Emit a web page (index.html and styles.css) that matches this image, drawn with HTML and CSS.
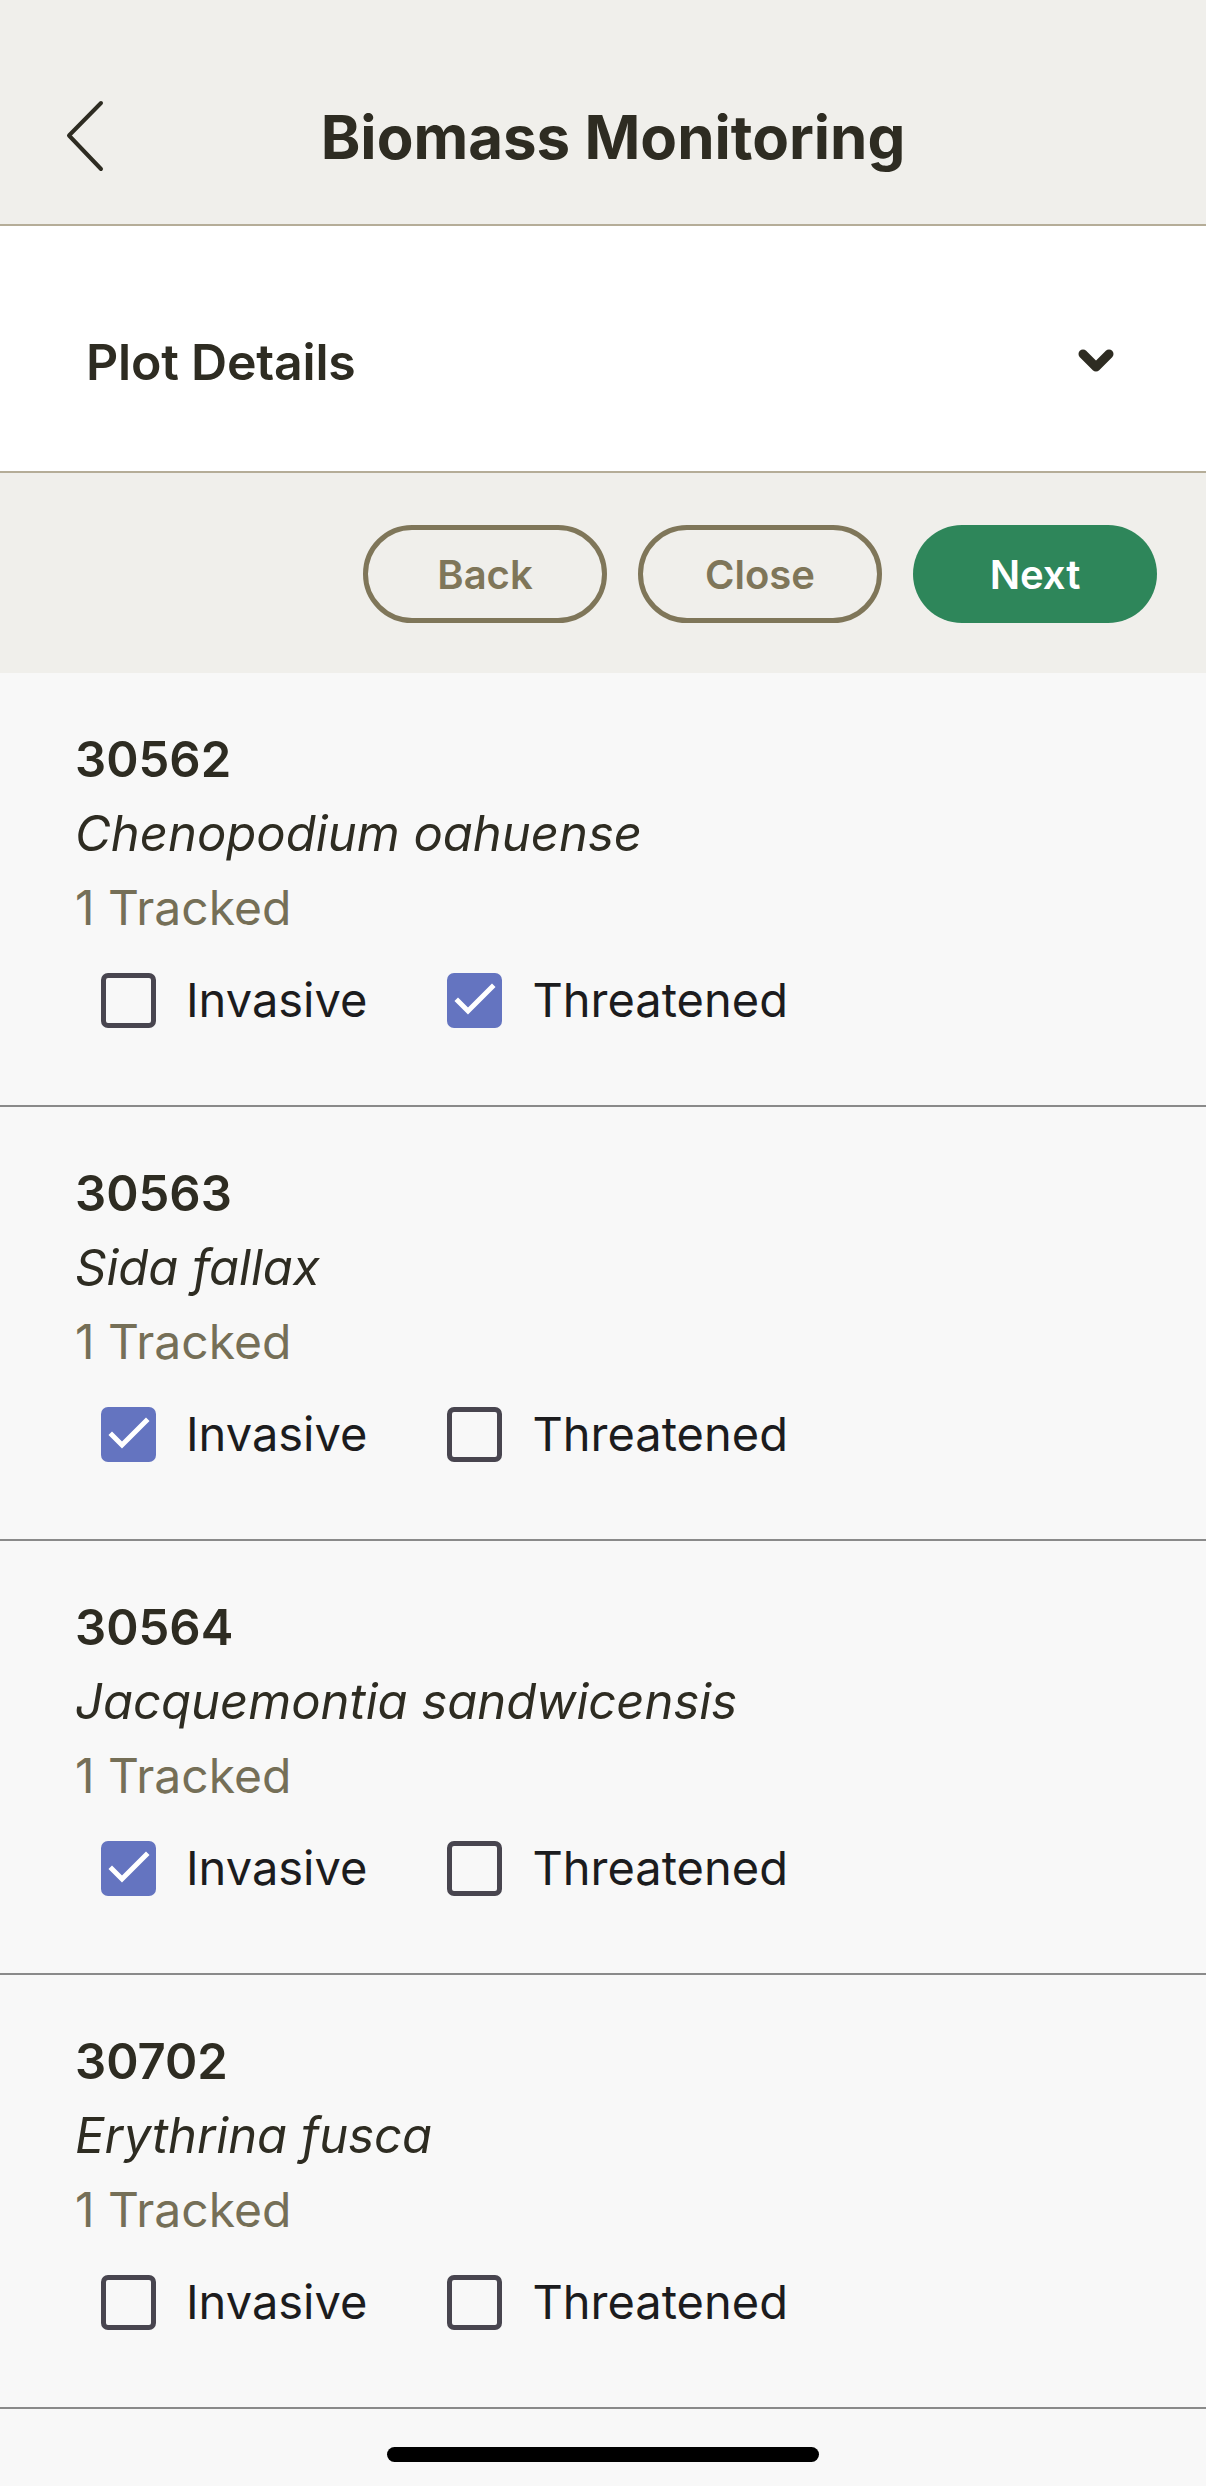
FILE: index.html
```html
<!DOCTYPE html>
<html lang="en">
<head>
<meta charset="utf-8">
<title>Biomass Monitoring</title>
<link rel="stylesheet" href="styles.css">
</head>
<body>
<div class="screen">
  <header class="topbar">
    <div class="topbar-left">
      <svg class="back-icon" width="40" height="74" viewBox="0 0 40 74" aria-hidden="true">
        <polyline points="35,3 3,35.5 35,69" fill="none" stroke="#2e2c22" stroke-width="4" stroke-linecap="round" stroke-linejoin="round"/>
      </svg>
    </div>
    <h1 class="title">Biomass Monitoring</h1>
    <div class="topbar-right"></div>
  </header>

  <section class="accordion">
    <span class="accordion-label">Plot Details</span>
    <svg class="chev-down" width="36" height="26" viewBox="0 0 36 26" aria-hidden="true">
      <polyline points="5,5 18,18 31,5" fill="none" stroke="#2e2c22" stroke-width="9" stroke-linecap="round" stroke-linejoin="round"/>
    </svg>
  </section>

  <nav class="actions">
    <button class="btn btn-outline">Back</button>
    <button class="btn btn-outline">Close</button>
    <button class="btn btn-primary">Next</button>
  </nav>

  <main class="list">
    <article class="item">
      <div class="item-id">30562</div>
      <div class="item-name">Chenopodium oahuense</div>
      <div class="item-count">1 Tracked</div>
      <div class="checks">
        <label class="check"><span class="box"></span><span class="check-label">Invasive</span></label>
        <label class="check"><span class="box checked"><svg viewBox="0 0 55 55" width="55" height="55"><polyline points="11,28 21,38 45,14" fill="none" stroke="#fff" stroke-width="5" stroke-linecap="square"/></svg></span><span class="check-label">Threatened</span></label>
      </div>
    </article>

    <article class="item">
      <div class="item-id">30563</div>
      <div class="item-name">Sida fallax</div>
      <div class="item-count">1 Tracked</div>
      <div class="checks">
        <label class="check"><span class="box checked"><svg viewBox="0 0 55 55" width="55" height="55"><polyline points="11,28 21,38 45,14" fill="none" stroke="#fff" stroke-width="5" stroke-linecap="square"/></svg></span><span class="check-label">Invasive</span></label>
        <label class="check"><span class="box"></span><span class="check-label">Threatened</span></label>
      </div>
    </article>

    <article class="item">
      <div class="item-id">30564</div>
      <div class="item-name">Jacquemontia sandwicensis</div>
      <div class="item-count">1 Tracked</div>
      <div class="checks">
        <label class="check"><span class="box checked"><svg viewBox="0 0 55 55" width="55" height="55"><polyline points="11,28 21,38 45,14" fill="none" stroke="#fff" stroke-width="5" stroke-linecap="square"/></svg></span><span class="check-label">Invasive</span></label>
        <label class="check"><span class="box"></span><span class="check-label">Threatened</span></label>
      </div>
    </article>

    <article class="item">
      <div class="item-id">30702</div>
      <div class="item-name">Erythrina fusca</div>
      <div class="item-count">1 Tracked</div>
      <div class="checks">
        <label class="check"><span class="box"></span><span class="check-label">Invasive</span></label>
        <label class="check"><span class="box"></span><span class="check-label">Threatened</span></label>
      </div>
    </article>
  </main>

  <div class="home-indicator"></div>
</div>
</body>
</html>
```

FILE: styles.css
```css
* {
  box-sizing: border-box;
}

html, body {
  margin: 0;
  padding: 0;
  background: #f8f8f8;
}

body {
  font-family: Inter, "Noto Sans", "Liberation Sans", sans-serif;
  color: #2e2c22;
}

.screen {
  position: relative;
  width: 1206px;
  height: 2486px;
  overflow: hidden;
  background: #f8f8f8;
}

/* Top bar */
.topbar {
  height: 226px;
  padding-top: 50px;
  background: #f0efeb;
  border-bottom: 2px solid #b5ad98;
  display: grid;
  grid-template-columns: 1fr auto 1fr;
  align-items: center;
}

.topbar-left {
  padding-left: 66px;
  display: flex;
  align-items: center;
}

.back-icon {
  display: block;
}

.title {
  margin: 0;
  font-size: 60px;
  font-weight: 700;
  line-height: 74px;
  color: #2e2c22;
  padding-left: 20px;
}

/* Accordion */
.accordion {
  height: 247px;
  background: #ffffff;
  border-bottom: 2px solid #b5ad98;
  display: flex;
  align-items: center;
  justify-content: space-between;
  padding: 27px 92px 0 86px;
}

.accordion-label {
  font-size: 50px;
  font-weight: 600;
  color: #2e2c22;
  letter-spacing: -0.2px;
}

.chev-down {
  display: block;
}

/* Action buttons */
.actions {
  height: 200px;
  background: #f0efeb;
  display: flex;
  justify-content: flex-end;
  align-items: center;
  gap: 31px;
  padding: 2px 49px 0 0;
}

.btn {
  width: 244px;
  height: 98px;
  border-radius: 49px;
  font-family: Inter, "Noto Sans", "Liberation Sans", sans-serif;
  font-size: 40px;
  font-weight: 600;
  display: flex;
  align-items: center;
  justify-content: center;
  padding: 0;
  cursor: pointer;
}

.btn-outline {
  background: transparent;
  border: 5px solid #7f7659;
  color: #7f7659;
}

.btn-primary {
  background: #2e865a;
  border: none;
  color: #ffffff;
}

/* List */
.list {
  background: #f8f8f8;
}

.item {
  padding: 50px 75px 50px 75px;
  border-bottom: 2px solid #8a8a8a;
}

.item-id {
  font-size: 49px;
  font-weight: 600;
  line-height: 74px;
  color: #2e2c22;
}

.item-name {
  font-size: 49px;
  font-style: italic;
  line-height: 74px;
  color: #2e2c22;
}

.item-count {
  font-size: 48px;
  line-height: 74px;
  color: #756f57;
}

.checks {
  height: 110px;
  display: flex;
  align-items: center;
  gap: 80px;
  padding-left: 26px;
}

.check {
  display: flex;
  align-items: center;
  gap: 30px;
}

.box {
  width: 55px;
  height: 55px;
  border: 5px solid #48454f;
  border-radius: 7px;
  display: block;
  position: relative;
}

.box.checked {
  background: #6474c0;
  border: none;
}

.box svg {
  display: block;
}

.check-label {
  font-size: 47px;
  line-height: 60px;
  color: #1c1c1e;
}

.home-indicator {
  position: absolute;
  left: 387px;
  bottom: 24px;
  width: 432px;
  height: 15px;
  border-radius: 8px;
  background: #000000;
}
```
